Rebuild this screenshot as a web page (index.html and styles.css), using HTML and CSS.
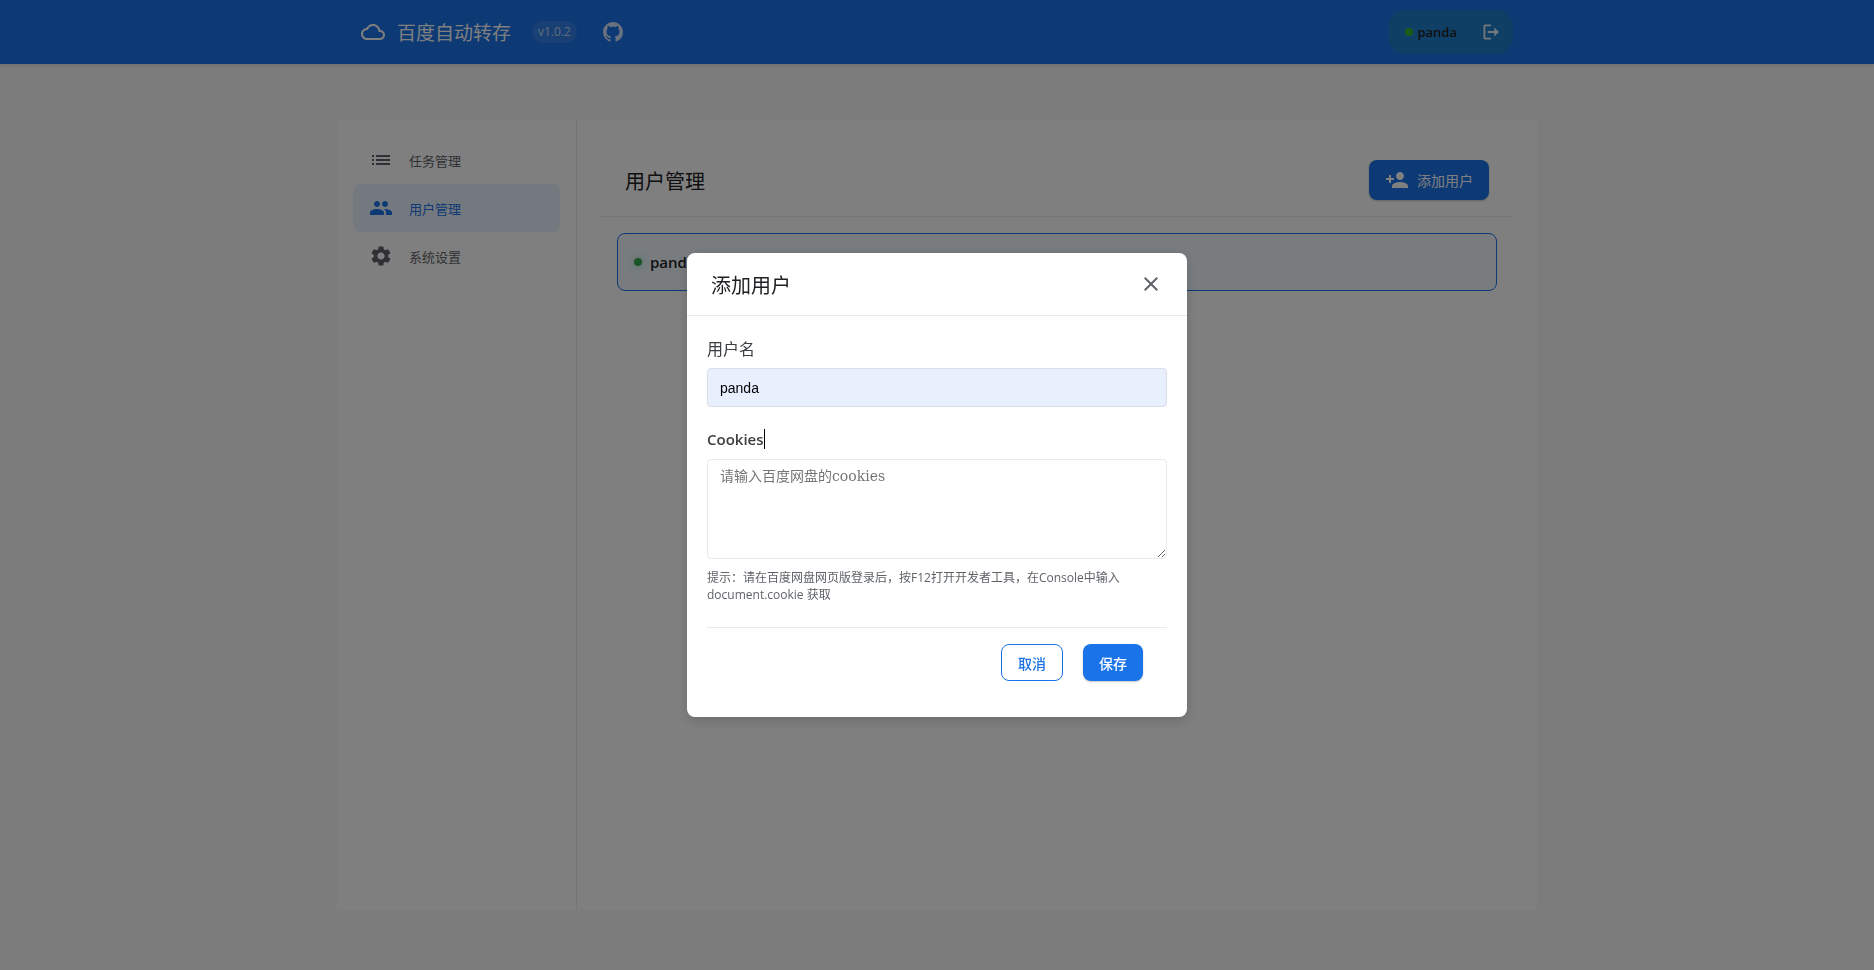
FILE: index.html
```html
<!DOCTYPE html>
<html lang="zh-CN">
<head>
<meta charset="utf-8">
<title>百度自动转存</title>
<link rel="stylesheet" href="styles.css">
</head>
<body>
<header class="topbar">
  <div class="topbar-inner">
    <svg class="icon" viewBox="0 0 24 24"><path d="M19.35 10.04C18.67 6.59 15.64 4 12 4 9.11 4 6.6 5.64 5.35 8.04 2.34 8.36 0 10.91 0 14c0 3.31 2.69 6 6 6h13c2.76 0 5-2.24 5-5 0-2.64-2.05-4.78-4.65-4.96zM19 18H6c-2.21 0-4-1.79-4-4 0-2.05 1.53-3.76 3.56-3.97l1.07-.11.5-.95C8.08 7.14 9.94 6 12 6c2.62 0 4.88 1.86 5.39 4.43l.3 1.5 1.53.11c1.56.1 2.78 1.41 2.78 2.96 0 1.65-1.35 3-3 3z"/></svg>
    <h1 class="brand">百度自动转存</h1>
    <span class="version">v1.0.2</span>
    <a class="github" href="#" aria-label="GitHub"><svg class="icon-small" viewBox="0 0 16 16"><path d="M8 0C3.58 0 0 3.58 0 8c0 3.54 2.29 6.53 5.47 7.59.4.07.55-.17.55-.38 0-.19-.01-.82-.01-1.49-2.01.37-2.53-.49-2.69-.94-.09-.23-.48-.94-.82-1.13-.28-.15-.68-.52-.01-.53.63-.01 1.08.58 1.23.82.72 1.21 1.87.87 2.33.66.07-.52.28-.87.51-1.07-1.78-.2-3.64-.89-3.64-3.95 0-.87.31-1.59.82-2.15-.08-.2-.36-1.02.08-2.12 0 0 .67-.21 2.2.82.64-.18 1.32-.27 2-.27s1.36.09 2 .27c1.53-1.04 2.2-.82 2.2-.82.44 1.1.16 1.92.08 2.12.51.56.82 1.27.82 2.15 0 3.07-1.87 3.75-3.65 3.95.29.25.54.73.54 1.48 0 1.07-.01 1.93-.01 2.2 0 .21.15.46.55.38A8.01 8.01 0 0 0 16 8c0-4.42-3.58-8-8-8z"/></svg></a>
    <div class="account">
      <span class="dot"></span>
      <span class="account-name">panda</span>
      <button class="logout" type="button" aria-label="退出"><svg class="icon-small" viewBox="0 0 24 24"><path d="M11 3H5a2 2 0 0 0-2 2v14a2 2 0 0 0 2 2h7v-2.200H5.200V5.200H12V3zM16 6.500v4.400H8v2.200h8v4.400l5.500-5.500z"/></svg></button>
    </div>
  </div>
</header>

<main class="layout">
  <nav class="sidebar">
    <a class="nav-item" href="#"><svg class="icon" viewBox="0 0 24 24"><path d="M3 13h2v-2H3v2zm0 4h2v-2H3v2zm0-8h2V7H3v2zm4 4h14v-2H7v2zm0 4h14v-2H7v2zM7 7v2h14V7H7z"/></svg>任务管理</a>
    <a class="nav-item active" href="#"><svg class="icon" viewBox="0 0 24 24"><path d="M16 11c1.66 0 2.990-1.340 2.990-3S17.660 5 16 5c-1.660 0-3 1.340-3 3s1.340 3 3 3zm-8 0c1.660 0 2.990-1.340 2.990-3S9.660 5 8 5C6.340 5 5 6.340 5 8s1.340 3 3 3zm0 2c-2.330 0-7 1.170-7 3.500V19h14v-2.500c0-2.330-4.670-3.500-7-3.500zm8 0c-.290 0-.620.020-.970.050 1.160.840 1.970 1.970 1.970 3.450V19h6v-2.500c0-2.330-4.670-3.500-7-3.500z"/></svg>用户管理</a>
    <a class="nav-item" href="#"><svg class="icon" viewBox="0 0 24 24"><path d="M19.14 12.94c.04-.3.06-.61.06-.94 0-.32-.02-.64-.07-.94l2.03-1.58a.49.49 0 0 0 .12-.61l-1.92-3.32a.488.488 0 0 0-.59-.22l-2.39.96c-.5-.38-1.03-.7-1.62-.94l-.36-2.54a.484.484 0 0 0-.48-.41h-3.84c-.24 0-.43.17-.47.41l-.36 2.54c-.59.24-1.13.57-1.62.94l-2.39-.96c-.22-.08-.47 0-.59.22L2.74 8.87c-.12.21-.08.47.12.61l2.03 1.58c-.05.3-.09.63-.09.94s.02.64.07.94l-2.03 1.58a.49.49 0 0 0-.12.61l1.92 3.32c.12.22.37.29.59.22l2.39-.96c.5.38 1.03.7 1.62.94l.36 2.54c.05.24.24.41.48.41h3.84c.24 0 .44-.17.47-.41l.36-2.54c.59-.24 1.13-.56 1.62-.94l2.39.96c.22.08.47 0 .59-.22l1.92-3.32c.12-.22.07-.47-.12-.61l-2.01-1.58zM12 15.600c-1.980 0-3.600-1.620-3.600-3.600s1.620-3.600 3.600-3.600 3.600 1.620 3.600 3.600-1.620 3.600-3.600 3.600z"/></svg>系统设置</a>
  </nav>
  <section class="content">
    <div class="content-head">
      <h2 class="title">用户管理</h2>
      <button class="btn-add" type="button"><svg class="icon" viewBox="0 0 24 24"><path d="M15 12c2.210 0 4-1.790 4-4s-1.790-4-4-4-4 1.790-4 4 1.790 4 4 4zm-9-2V7H4v3H1v2h3v3h2v-3h3v-2H6zm9 4c-2.670 0-8 1.340-8 4v2h16v-2c0-2.660-5.330-4-8-4z"/></svg>添加用户</button>
    </div>
    <ul class="user-list">
      <li class="user-card"><span class="dot glow"></span><span class="user-name">panda</span></li>
    </ul>
  </section>
</main>

<div class="overlay">
  <div class="modal" role="dialog" aria-modal="true" aria-labelledby="modal-title">
    <div class="modal-head">
      <h2 class="title" id="modal-title">添加用户</h2>
      <button class="close" type="button" aria-label="关闭"><svg class="icon" viewBox="0 0 24 24"><path d="M19 6.410L17.590 5 12 10.590 6.410 5 5 6.410 10.590 12 5 17.590 6.410 19 12 13.410 17.590 19 19 17.590 13.410 12z"/></svg></button>
    </div>
    <form class="modal-body">
      <div class="field">
        <label for="username">用户名</label>
        <input id="username" type="text" value="panda">
      </div>
      <div class="field">
        <label for="cookies">Cookies<span class="caret"></span></label>
        <textarea id="cookies" placeholder="请输入百度网盘的cookies"></textarea>
        <p class="hint">提示：请在百度网盘网页版登录后，按F12打开开发者工具，在Console中输入 document.cookie 获取</p>
      </div>
      <div class="actions">
        <button class="btn cancel" type="button">取消</button>
        <button class="btn save" type="submit">保存</button>
      </div>
    </form>
  </div>
</div>
</body>
</html>
```
FILE: styles.css
```css
* {
  box-sizing: border-box;
}

body {
  margin: 0;
  min-height: 100vh;
  display: flex;
  flex-direction: column;
  background: #f8f9fa;
  color: #202124;
  font-family: "Open Sans", "Noto Sans CJK SC", sans-serif;
  font-size: 14px;
}

h1, h2, p, ul {
  margin: 0;
  padding: 0;
  font-weight: 400;
}

button {
  border: 0;
  background: none;
  font-family: inherit;
  font-size: 14px;
  padding: 0;
}

.icon {
  width: 24px;
  height: 24px;
  fill: currentColor;
  flex: none;
}

.icon-small {
  display: block;
  width: 20px;
  height: 20px;
  fill: currentColor;
}

.topbar {
  background: #1a73e8;
  color: #fff;
  box-shadow: 0 2px 4px rgba(0, 0, 0, 0.1);
}

.topbar-inner {
  max-width: 1200px;
  height: 64px;
  margin: 0 auto;
  padding: 0 24px;
  display: flex;
  align-items: center;
}

.brand {
  margin-left: 12px;
  font-size: 19px;
}

.version {
  margin-left: 21px;
  padding: 0 6px;
  border-radius: 11px;
  background: rgba(255, 255, 255, 0.1);
  color: rgba(255, 255, 255, 0.7);
  font-size: 12px;
  line-height: 22px;
}

.github {
  margin-left: 26px;
  color: rgba(255, 255, 255, 0.8);
}

.account {
  margin-left: auto;
  height: 44px;
  padding: 0 12px 0 16px;
  border-radius: 16px;
  background: rgba(52, 168, 83, 0.2);
  display: flex;
  align-items: center;
}

.account-name {
  margin-left: 4px;
  color: #202124;
  font-size: 13px;
  font-weight: 600;
}

.logout {
  margin-left: 24px;
  color: rgba(255, 255, 255, 0.9);
}

.dot {
  width: 8px;
  height: 8px;
  border-radius: 50%;
  background: #34a853;
  flex: none;
}

.account .dot {
  background: #2eb82e;
}

.glow {
  box-shadow: 0 0 8px rgba(52, 168, 83, 0.4);
}

.layout {
  flex: 1;
  width: 100%;
  max-width: 1200px;
  margin: 56px auto 60px;
  background: #fff;
  display: flex;
}

.sidebar {
  width: 240px;
  padding: 16px;
  border-right: 1px solid #e8eaed;
}

.nav-item {
  height: 48px;
  padding: 0 16px;
  border-radius: 8px;
  display: flex;
  align-items: center;
  gap: 16px;
  color: #5f6368;
  font-size: 13px;
  text-decoration: none;
}

.nav-item.active {
  background: #e8f0fe;
  color: #1a73e8;
}

.content {
  flex: 1;
  padding: 24px;
}

.content-head {
  padding: 16px 24px;
  border-bottom: 1px solid #e8eaed;
  display: flex;
  align-items: center;
  justify-content: space-between;
}

.title {
  padding-top: 3px;
  font-size: 20px;
  line-height: 27px;
}

.btn-add {
  height: 40px;
  padding: 0 16px;
  border-radius: 8px;
  background: #1a73e8;
  color: #fff;
  display: flex;
  align-items: center;
  gap: 8px;
  box-shadow: 0 1px 2px rgba(60, 64, 67, 0.3);
}

.user-list {
  padding: 16px;
  list-style: none;
}

.user-card {
  height: 58px;
  padding: 0 16px;
  border: 1px solid #1a73e8;
  border-radius: 8px;
  background: #f0f9fe;
  display: flex;
  align-items: center;
  gap: 8px;
}

.user-name {
  font-size: 15px;
  font-weight: 600;
}

.overlay {
  position: fixed;
  inset: 0;
  background: rgba(0, 0, 0, 0.5);
  display: flex;
  align-items: center;
  justify-content: center;
}

.modal {
  width: 500px;
  border-radius: 8px;
  background: #fff;
  box-shadow: 0 4px 12px rgba(0, 0, 0, 0.15);
}

.modal-head {
  padding: 16px 24px;
  border-bottom: 1px solid #e8eaed;
  display: flex;
  justify-content: space-between;
  align-items: center;
}

.close {
  height: 24px;
  color: #5f6368;
}

.modal-body {
  padding: 20px;
}

.field + .field {
  margin-top: 20px;
}

.field label {
  display: flex;
  align-items: center;
  height: 24px;
  margin-bottom: 8px;
  color: #3c4043;
  font-size: 16px;
}

.field label[for="cookies"] {
  font-size: 15px;
  font-weight: 600;
}

.caret {
  width: 1px;
  height: 20px;
  background: #000;
}

.field input,
.field textarea {
  display: block;
  width: 100%;
  padding: 8px 12px;
  border: 1px solid #e8eaed;
  border-radius: 4px;
  font-family: "Liberation Sans", Arial, sans-serif;
  font-size: 14px;
}

.field input {
  height: 39px;
  border-color: #d8dde8;
  background: #e8f0fe;
  color: #000;
}

.field textarea {
  height: 100px;
  font-family: "DejaVu Serif", "Noto Sans CJK SC", serif;
  line-height: 16px;
  resize: vertical;
}

.field textarea::placeholder {
  color: #757575;
}

.hint {
  margin-top: 10px;
  color: #5f6368;
  font-size: 12px;
  line-height: 17px;
}

.actions {
  margin-top: 24px;
  padding: 16px 24px;
  border-top: 1px solid #e8eaed;
  display: flex;
  justify-content: flex-end;
  gap: 20px;
}

.btn {
  height: 37px;
  padding: 0 16px;
  border-radius: 8px;
  font-weight: 500;
}

.cancel {
  border: 1px solid #1a73e8;
  color: #1a73e8;
}

.save {
  background: #1a73e8;
  color: #fff;
  box-shadow: 0 1px 2px rgba(60, 64, 67, 0.3);
}
```
